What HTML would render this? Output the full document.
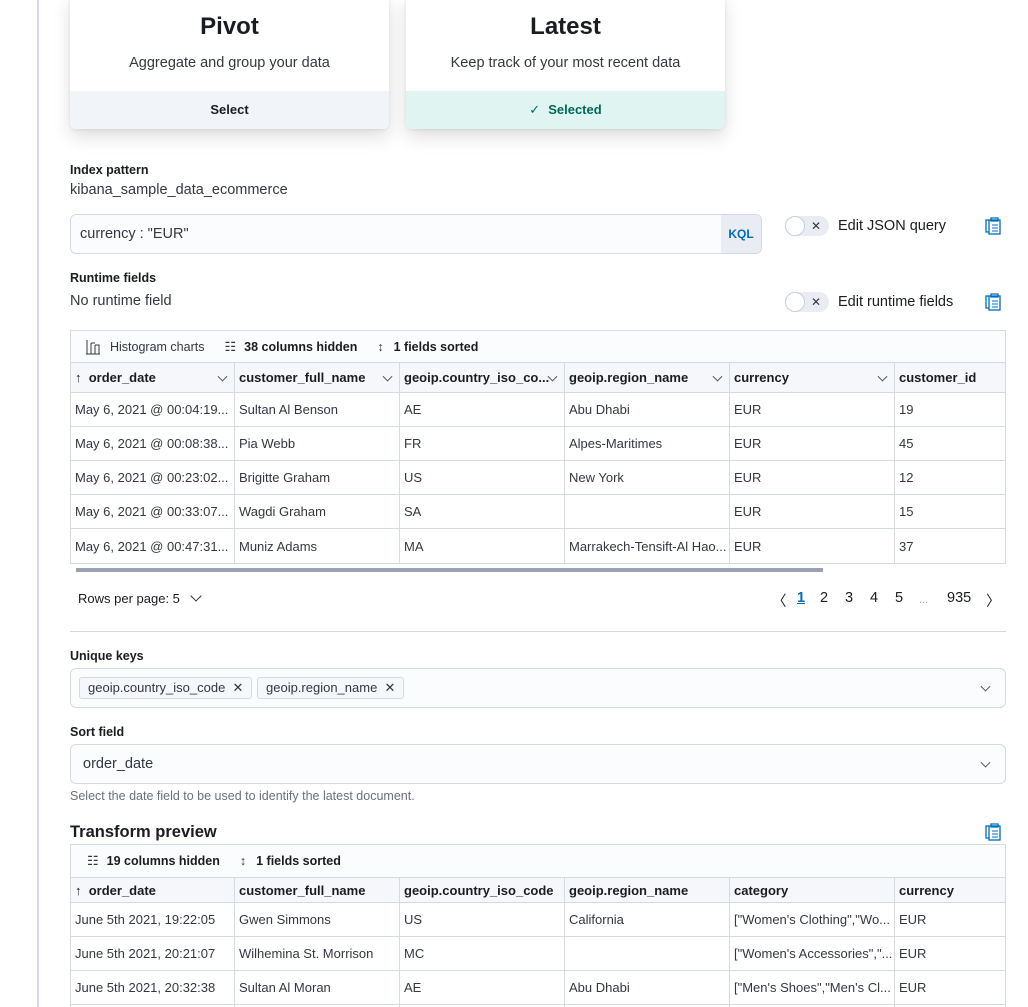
<!DOCTYPE html>
<html><head><meta charset="utf-8"><style>
*{box-sizing:border-box;margin:0;padding:0}
html,body{width:1028px;height:1007px;overflow:hidden}
body{background:#fff;font-family:"Liberation Sans",sans-serif;color:#343741;position:relative;font-size:14px}
.a{position:absolute}
.vl{left:37px;top:0;width:2px;height:1007px;background:#d3dae6}
.card{background:#fff;border-radius:6px;box-shadow:0 8px 18px rgba(0,0,0,.13),0 1px 3px rgba(0,0,0,.08);overflow:hidden;top:-6px;height:135px;width:319px}
.card h2{position:absolute;top:19px;width:100%;text-align:center;font-size:24px;font-weight:bold;color:#1a1c21}
.card p{position:absolute;top:61px;width:100%;text-align:center;font-size:14.5px;color:#343741}
.card .f{position:absolute;left:0;right:0;bottom:0;height:38px;line-height:38px;text-align:center;font-weight:bold;font-size:13px}
.lbl{font-size:12.5px;font-weight:bold;color:#1a1c21}
.in{border:1px solid #d3dae6;background:#fbfcfd;border-radius:6px}
.tbl{left:70px;width:936px;border:1px solid #d3dae6}
.tb{height:32px;background:#fbfcfd;border-bottom:1px solid #d3dae6;font-size:12.5px;display:flex;align-items:center;padding-left:14px}
.row{display:flex;border-bottom:1px solid #d3dae6;font-size:13px}
.row div{border-right:1px solid #d3dae6;padding-left:4px;white-space:nowrap;overflow:hidden;display:flex;align-items:center;position:relative}
.row div:last-child{border-right:none}
.hd{background:#f5f7fa;font-weight:bold;color:#1a1c21}
.c1{width:164px}.c2{width:165px}.c3{width:165px}.c4{width:165px}.c5{width:165px}.c6{width:110px}
.chev{position:absolute;right:8px;top:50%;width:7px;height:7px;border-right:1px solid #555;border-bottom:1px solid #555;transform:translateY(-70%) rotate(45deg)}
.tog{width:44px;height:20px;border-radius:10px;background:#e9edf3}
.tog:before{content:"";position:absolute;left:0;top:0;width:20px;height:20px;border-radius:50%;background:#fff;border:1px solid #c9cfd8;box-sizing:border-box}
.tog:after{content:"✕";position:absolute;left:26px;top:3px;font-size:12px;line-height:14px;color:#343741}
.badge{border:1px solid #d3dae6;background:#f5f7fa;border-radius:3px;height:22px;line-height:20px;padding:0 8px;font-size:13px;color:#343741}
</style></head><body>
<div class="a vl"></div>

<div class="a card" style="left:70px"><h2>Pivot</h2><p>Aggregate and group your data</p><div class="f" style="background:#f1f4f8;color:#1a1c21">Select</div></div>
<div class="a card" style="left:406px"><h2>Latest</h2><p>Keep track of your most recent data</p><div class="f" style="background:#e0f5f1;color:#00695c"><span style="font-weight:normal;margin-right:8px">✓</span>Selected</div></div>

<div class="a lbl" style="left:70px;top:163px">Index pattern</div>
<div class="a" style="left:70px;top:182px;font-size:14.5px">kibana_sample_data_ecommerce</div>
<div class="a in" style="left:70px;top:214px;width:692px;height:40px;overflow:hidden"><span class="a" style="left:9px;top:11px;font-size:14.5px">currency : "EUR"</span><div class="a" style="right:0;top:0;width:40px;height:38px;background:#e9edf3;color:#006bb8;font-weight:bold;font-size:12px;line-height:38px;text-align:center">KQL</div></div>
<div class="a tog" style="left:785px;top:216px"></div>
<div class="a" style="left:838px;top:218px;font-size:14.5px;color:#1a1c21">Edit JSON query</div>
<svg class="a" style="left:985px;top:217px" width="16" height="18" viewBox="0 0 16 18"><rect x="4" y="3" width="11" height="14" fill="none" stroke="#006bb8" stroke-width="1.3"/><path d="M4 15H1V3h3M6 1h7v3H6z" fill="none" stroke="#006bb8" stroke-width="1.3"/><path d="M7 8h6M7 11h6M7 14h6" stroke="#006bb8"/></svg>

<div class="a lbl" style="left:70px;top:271px">Runtime fields</div>
<div class="a" style="left:70px;top:293px;font-size:14.5px">No runtime field</div>
<div class="a tog" style="left:785px;top:292px"></div>
<div class="a" style="left:838px;top:294px;font-size:14.5px;color:#1a1c21">Edit runtime fields</div>
<svg class="a" style="left:985px;top:293px" width="16" height="18" viewBox="0 0 16 18"><rect x="4" y="3" width="11" height="14" fill="none" stroke="#006bb8" stroke-width="1.3"/><path d="M4 15H1V3h3M6 1h7v3H6z" fill="none" stroke="#006bb8" stroke-width="1.3"/><path d="M7 8h6M7 11h6M7 14h6" stroke="#006bb8"/></svg>

<div class="a tbl" style="top:330px">
<div class="tb"><svg width="16" height="16" viewBox="0 0 16 16" style="margin-right:9px"><path d="M1 15h14M2 1v14M6 4v11M10 6v9M6 4h4M10 6h4v9" fill="none" stroke="#343741"/></svg><span>Histogram charts</span>
<span style="margin-left:20px;font-size:13px">☷</span><b style="margin-left:8px;color:#1a1c21">38 columns hidden</b>
<span style="margin-left:20px">↕</span><b style="margin-left:10px;color:#1a1c21">1 fields sorted</b></div>
<div class="row hd" style="height:30px"><div class="c1">↑&nbsp;&nbsp;order_date<i class="chev"></i></div><div class="c2">customer_full_name<i class="chev"></i></div><div class="c3">geoip.country_iso_co...<i class="chev"></i></div><div class="c4">geoip.region_name<i class="chev"></i></div><div class="c5">currency<i class="chev"></i></div><div class="c6">customer_id</div></div>
<div class="row" style="height:34px"><div class="c1">May 6, 2021 @ 00:04:19...</div><div class="c2">Sultan Al Benson</div><div class="c3">AE</div><div class="c4">Abu Dhabi</div><div class="c5">EUR</div><div class="c6">19</div></div>
<div class="row" style="height:34px"><div class="c1">May 6, 2021 @ 00:08:38...</div><div class="c2">Pia Webb</div><div class="c3">FR</div><div class="c4">Alpes-Maritimes</div><div class="c5">EUR</div><div class="c6">45</div></div>
<div class="row" style="height:34px"><div class="c1">May 6, 2021 @ 00:23:02...</div><div class="c2">Brigitte Graham</div><div class="c3">US</div><div class="c4">New York</div><div class="c5">EUR</div><div class="c6">12</div></div>
<div class="row" style="height:34px"><div class="c1">May 6, 2021 @ 00:33:07...</div><div class="c2">Wagdi Graham</div><div class="c3">SA</div><div class="c4"></div><div class="c5">EUR</div><div class="c6">15</div></div>
<div class="row" style="height:34px;border-bottom:none"><div class="c1">May 6, 2021 @ 00:47:31...</div><div class="c2">Muniz Adams</div><div class="c3">MA</div><div class="c4">Marrakech-Tensift-Al Hao...</div><div class="c5">EUR</div><div class="c6">37</div></div>
</div>
<div class="a" style="left:76px;top:568px;width:747px;height:4px;background:#98a2b3"></div>

<div class="a" style="left:78px;top:591px;font-size:13px;color:#1a1c21">Rows per page: 5 <span style="display:inline-block;width:8px;height:8px;border-right:1.3px solid #343741;border-bottom:1.3px solid #343741;transform:rotate(45deg);margin-left:8px;position:relative;top:-3px"></span></div>
<div class="a" style="left:770px;top:590px;font-size:14.5px;color:#1a1c21">
<span style="position:absolute;left:2px">〈</span>
<span style="position:absolute;left:27px;color:#006bb8;font-weight:bold;text-decoration:underline">1</span>
<span style="position:absolute;left:50px">2</span><span style="position:absolute;left:75px">3</span><span style="position:absolute;left:100px">4</span><span style="position:absolute;left:125px">5</span>
<span style="position:absolute;left:149px;top:4px;color:#98a2b3;font-size:11px">...</span>
<span style="position:absolute;left:177px">935</span><span style="position:absolute;left:216px">〉</span></div>
<div class="a" style="left:70px;top:631px;width:936px;height:1px;background:#d3dae6"></div>

<div class="a lbl" style="left:70px;top:649px">Unique keys</div>
<div class="a in" style="left:70px;top:668px;width:936px;height:40px"><div class="a badge" style="left:8px;top:8px">geoip.country_iso_code&nbsp; ✕</div><div class="a badge" style="left:186px;top:8px">geoip.region_name&nbsp; ✕</div><i class="chev" style="right:16px"></i></div>
<div class="a lbl" style="left:70px;top:725px">Sort field</div>
<div class="a in" style="left:70px;top:744px;width:936px;height:40px"><span class="a" style="left:12px;top:11px;font-size:14.5px">order_date</span><i class="chev" style="right:16px"></i></div>
<div class="a" style="left:70px;top:789px;font-size:12.5px;color:#69707d">Select the date field to be used to identify the latest document.</div>

<div class="a" style="left:70px;top:823px;font-size:16.5px;font-weight:bold;color:#1a1c21">Transform preview</div>
<svg class="a" style="left:985px;top:823px" width="16" height="18" viewBox="0 0 16 18"><rect x="4" y="3" width="11" height="14" fill="none" stroke="#006bb8" stroke-width="1.3"/><path d="M4 15H1V3h3M6 1h7v3H6z" fill="none" stroke="#006bb8" stroke-width="1.3"/><path d="M7 8h6M7 11h6M7 14h6" stroke="#006bb8"/></svg>
<div class="a tbl" style="top:844px;border-bottom:none">
<div class="tb" style="height:33px"><span style="margin-left:2px;font-size:13px">☷</span><b style="margin-left:8px;color:#1a1c21">19 columns hidden</b>
<span style="margin-left:20px">↕</span><b style="margin-left:10px;color:#1a1c21">1 fields sorted</b></div>
<div class="row hd" style="height:25px"><div class="c1">↑&nbsp;&nbsp;order_date</div><div class="c2">customer_full_name</div><div class="c3">geoip.country_iso_code</div><div class="c4">geoip.region_name</div><div class="c5">category</div><div class="c6">currency</div></div>
<div class="row" style="height:34px"><div class="c1">June 5th 2021, 19:22:05</div><div class="c2">Gwen Simmons</div><div class="c3">US</div><div class="c4">California</div><div class="c5">["Women's Clothing","Wo...</div><div class="c6">EUR</div></div>
<div class="row" style="height:34px"><div class="c1">June 5th 2021, 20:21:07</div><div class="c2">Wilhemina St. Morrison</div><div class="c3">MC</div><div class="c4"></div><div class="c5">["Women's Accessories","...</div><div class="c6">EUR</div></div>
<div class="row" style="height:34px"><div class="c1">June 5th 2021, 20:32:38</div><div class="c2">Sultan Al Moran</div><div class="c3">AE</div><div class="c4">Abu Dhabi</div><div class="c5">["Men's Shoes","Men's Cl...</div><div class="c6">EUR</div></div>
<div class="row" style="height:10px"><div class="c1"></div><div class="c2"></div><div class="c3"></div><div class="c4"></div><div class="c5"></div><div class="c6"></div></div>
</div>
</body></html>
